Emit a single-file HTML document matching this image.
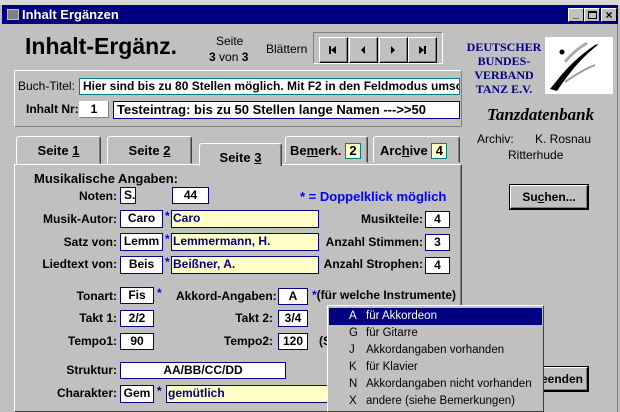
<!DOCTYPE html>
<html><head><meta charset="utf-8"><style>
*{margin:0;padding:0;box-sizing:border-box}
body{width:620px;height:412px;background:#c0c0c0;position:relative;overflow:hidden;font-family:"Liberation Sans",Arial,sans-serif;font-size:12px;color:#000}
.a{position:absolute;white-space:nowrap}
.b{font-weight:bold}
.f{position:absolute;background:#fff;border:1px solid #000080;font-weight:bold;font-size:12px;line-height:15px;padding-left:3px;white-space:nowrap;overflow:hidden}
.y{background:#ffffc8;color:#000080}
.c{text-align:center;padding:0}
.lbl{position:absolute;font-weight:bold;text-align:right;white-space:nowrap}
.st{position:absolute;color:#0000ff;font-weight:bold}
.s3{border:1px solid;border-color:#808080 #fff #fff #808080}
.tab{position:absolute;border:1px solid;border-color:#fff #404040 transparent #fff;border-radius:3px 3px 0 0;box-shadow:inset -1px 0 #808080;font-weight:bold;font-size:13px;text-align:center;padding-top:6px;background:#c0c0c0}
.btn{position:absolute;background:#c0c0c0;border:1px solid;border-color:#fff #000 #000 #fff;box-shadow:inset -1px -1px #808080,0 0 0 1px #000;font-weight:bold;text-align:center}
.nb{position:absolute;top:37px;width:29px;height:26px;background:#c0c0c0;border:1px solid;border-color:#fff #000 #000 #fff;box-shadow:inset -1px -1px #808080}
.dd div{height:17px;line-height:17px;font-size:11.5px;padding-left:0;white-space:nowrap}
.dd span{display:inline-block;width:37px;padding-left:20px}
</style></head><body>
<div class="a" style="left:0;top:0;width:620px;height:5px;background:#d8d8d8"></div>
<div class="a" style="left:2px;top:5px;width:616px;height:19px;background:#000080"></div>
<div class="a" style="left:7px;top:9px;width:12px;height:11px;background:#808080;border:1px solid #c0c0c0"></div>
<div class="a b" style="left:22px;top:7px;color:#fff;font-size:13px">Inhalt Ergänzen</div>
<div class="a" style="left:568px;top:8px;width:16px;height:14px;background:#c0c0c0;border:1px solid;border-color:#fff #000 #000 #fff;font-size:11px;text-align:center;line-height:11px;font-weight:bold">_</div>
<div class="a" style="left:584px;top:8px;width:16px;height:14px;background:#c0c0c0;border:1px solid;border-color:#fff #000 #000 #fff"><div style="margin:2px 3px;width:9px;height:8px;border:1px solid #000;border-top-width:2px"></div></div>
<div class="a" style="left:601px;top:8px;width:16px;height:14px;background:#c0c0c0;border:1px solid;border-color:#fff #000 #000 #fff;font-size:12px;text-align:center;line-height:12px;font-weight:bold">×</div>

<div class="a b" style="left:25px;top:33px;font-size:23px">Inhalt-Ergänz.</div>
<div class="a" style="left:216px;top:34px;font-size:12px">Seite</div>
<div class="a" style="left:209px;top:50px;font-size:12px"><b>3</b> von <b>3</b></div>
<div class="a" style="left:266px;top:42px">Blättern</div>
<div class="a s3" style="left:313px;top:32px;width:130px;height:32px"></div>
<div class="nb" style="left:319px"><svg width="27" height="24"><rect x="9" y="8" width="2" height="8"/><path d="M16 8v8l-5-4z"/></svg></div>
<div class="nb" style="left:349px"><svg width="27" height="24"><path d="M15 8v8l-4-4z"/></svg></div>
<div class="nb" style="left:379px"><svg width="27" height="24"><path d="M11 8v8l4-4z"/></svg></div>
<div class="nb" style="left:408px"><svg width="27" height="24"><path d="M10 8v8l5-4z"/><rect x="15" y="8" width="2" height="8"/></svg></div>

<div class="a" style="left:466px;top:40px;width:76px;text-align:center;font-family:'Liberation Serif',serif;font-weight:bold;color:#000080;font-size:12px;line-height:14px">DEUTSCHER<br>BUNDES-<br>VERBAND<br>TANZ E.V.</div>
<div class="a" style="left:545px;top:37px;width:68px;height:57px;background:#fff"><svg width="68" height="57"><path d="M5 52C15 40 25 25 50 8L54 7C35 22 25 35 12 54Z" fill="#000"/><circle cx="17" cy="15" r="2.5"/><path d="M20 25C28 15 35 10 42 6" stroke="#aaa" stroke-width="3" fill="none"/><path d="M20 45C30 38 40 32 50 28" stroke="#999" stroke-width="2" fill="none"/></svg></div>
<div class="a" style="left:487px;top:105px;font-family:'Liberation Serif',serif;font-weight:bold;font-style:italic;font-size:17px">Tanzdatenbank</div>
<div class="a" style="left:477px;top:132px">Archiv:</div>
<div class="a" style="left:535px;top:132px">K. Rosnau</div>
<div class="a" style="left:508px;top:148px">Ritterhude</div>

<div class="a" style="left:14px;top:70px;width:448px;height:57px;border:1px solid;border-color:#fff #808080 #808080 #fff"></div>
<div class="a" style="left:18px;top:79px">Buch-Titel:</div>
<div class="f" style="left:79px;top:78px;width:381px;height:17px;border-color:#008080">Hier sind bis zu 80 Stellen möglich. Mit F2 in den Feldmodus umschalten</div>
<div class="a b" style="left:26px;top:102px">Inhalt Nr:</div>
<div class="f c" style="left:79px;top:101px;width:30px;height:17px;border-color:#fff #808080 #808080 #fff">1</div>
<div class="f" style="left:113px;top:101px;width:347px;height:18px;font-size:13px">Testeintrag: bis zu 50 Stellen lange Namen ---&gt;&gt;50</div>

<div class="a" style="left:14px;top:164px;width:448px;height:248px;border:1px solid;border-color:#fff #404040 #404040 #fff;box-shadow:inset -1px 0 #808080"></div>
<div class="tab" style="left:16px;top:136px;width:85px;height:28px">Seite <u>1</u></div>
<div class="tab" style="left:107px;top:136px;width:85px;height:28px">Seite <u>2</u></div>
<div class="tab" style="left:199px;top:143px;width:83px;height:23px;border-bottom:none;padding-top:6px">Seite <u>3</u></div>
<div class="tab" style="left:285px;top:136px;width:83px;height:27px;text-align:left;padding-left:4px">Be<u>m</u>erk. <span style="display:inline-block;background:#ffffc8;border:1px solid #008080;width:16px;text-align:center;line-height:14px">2</span></div>
<div class="tab" style="left:373px;top:136px;width:87px;height:27px;text-align:left;padding-left:6px">Arc<u>h</u>ive <span style="display:inline-block;background:#ffffc8;border:1px solid #008080;width:16px;text-align:center;line-height:14px">4</span></div>

<div class="a b" style="left:34px;top:171px;font-size:13px">Musikalische Angaben:</div>
<div class="lbl" style="right:503px;top:189px">Noten:</div>
<div class="f" style="left:120px;top:187px;width:16px;height:17px">S.</div>
<div class="f c" style="left:172px;top:187px;width:37px;height:17px">44</div>
<div class="st" style="left:300px;top:189px;font-size:13px">* = Doppelklick möglich</div>

<div class="lbl" style="right:503px;top:212px">Musik-Autor:</div>
<div class="f c" style="left:120px;top:210px;width:43px;height:18px">Caro</div>
<div class="st" style="left:165px;top:209px">*</div>
<div class="f y" style="left:171px;top:210px;width:148px;height:18px;padding-left:1px">Caro</div>
<div class="lbl" style="right:197px;top:212px">Musikteile:</div>
<div class="f c" style="left:425px;top:211px;width:25px;height:17px">4</div>

<div class="lbl" style="right:503px;top:235px">Satz von:</div>
<div class="f c" style="left:120px;top:233px;width:43px;height:18px">Lemm</div>
<div class="st" style="left:165px;top:232px">*</div>
<div class="f y" style="left:171px;top:233px;width:148px;height:18px;padding-left:1px">Lemmermann, H.</div>
<div class="lbl" style="right:197px;top:235px">Anzahl Stimmen:</div>
<div class="f c" style="left:425px;top:234px;width:25px;height:17px">3</div>

<div class="lbl" style="right:503px;top:257px">Liedtext von:</div>
<div class="f c" style="left:120px;top:256px;width:43px;height:18px">Beis</div>
<div class="st" style="left:165px;top:255px">*</div>
<div class="f y" style="left:171px;top:256px;width:148px;height:18px;padding-left:1px">Beißner, A.</div>
<div class="lbl" style="right:197px;top:257px">Anzahl Strophen:</div>
<div class="f c" style="left:425px;top:257px;width:25px;height:17px">4</div>

<div class="lbl" style="right:503px;top:289px">Tonart:</div>
<div class="f c" style="left:120px;top:287px;width:34px;height:17px">Fis</div>
<div class="st" style="left:157px;top:286px">*</div>
<div class="lbl" style="left:176px;top:289px">Akkord-Angaben:</div>
<div class="f c" style="left:278px;top:288px;width:30px;height:17px">A</div>
<div class="a b" style="left:312px;top:288px"><span style="color:#00f">*</span>(für welche Instrumente)</div>

<div class="lbl" style="right:503px;top:311px">Takt 1:</div>
<div class="f c" style="left:120px;top:310px;width:34px;height:17px">2/2</div>
<div class="lbl" style="right:347px;top:311px">Takt 2:</div>
<div class="f c" style="left:278px;top:310px;width:30px;height:17px">3/4</div>

<div class="lbl" style="right:503px;top:334px">Tempo1:</div>
<div class="f c" style="left:120px;top:333px;width:34px;height:17px">90</div>
<div class="lbl" style="right:347px;top:334px">Tempo2:</div>
<div class="f c" style="left:278px;top:333px;width:30px;height:17px">120</div>
<div class="a b" style="left:319px;top:334px">(S</div>

<div class="lbl" style="right:503px;top:363px">Struktur:</div>
<div class="f c" style="left:120px;top:362px;width:166px;height:17px">AA/BB/CC/DD</div>
<div class="lbl" style="right:503px;top:386px">Charakter:</div>
<div class="f c" style="left:120px;top:385px;width:34px;height:18px">Gem</div>
<div class="st" style="left:157px;top:384px;color:#000080">*</div>
<div class="f y" style="left:166px;top:385px;width:170px;height:18px;padding-left:1px">gemütlich</div>

<div class="btn" style="left:510px;top:185px;width:78px;height:24px;line-height:22px">Su<u>c</u>hen...</div>
<div class="btn" style="left:527px;top:367px;width:61px;height:24px;line-height:22px;text-align:right;padding-right:4px">Beenden</div>

<div class="a dd" style="left:327px;top:305px;width:217px;height:107px;background:#c0c0c0;border:1px solid;border-color:#fff #404040 #404040 #fff;padding:2px 1px">
<div style="background:#000080;color:#fff"><span>A</span>für Akkordeon</div>
<div><span>G</span>für Gitarre</div>
<div><span>J</span>Akkordangaben vorhanden</div>
<div><span>K</span>für Klavier</div>
<div><span>N</span>Akkordangaben nicht vorhanden</div>
<div><span>X</span>andere (siehe Bemerkungen)</div>
</div>
<div class="a" style="left:617px;top:24px;width:1px;height:388px;background:#808080"></div>
</body></html>
